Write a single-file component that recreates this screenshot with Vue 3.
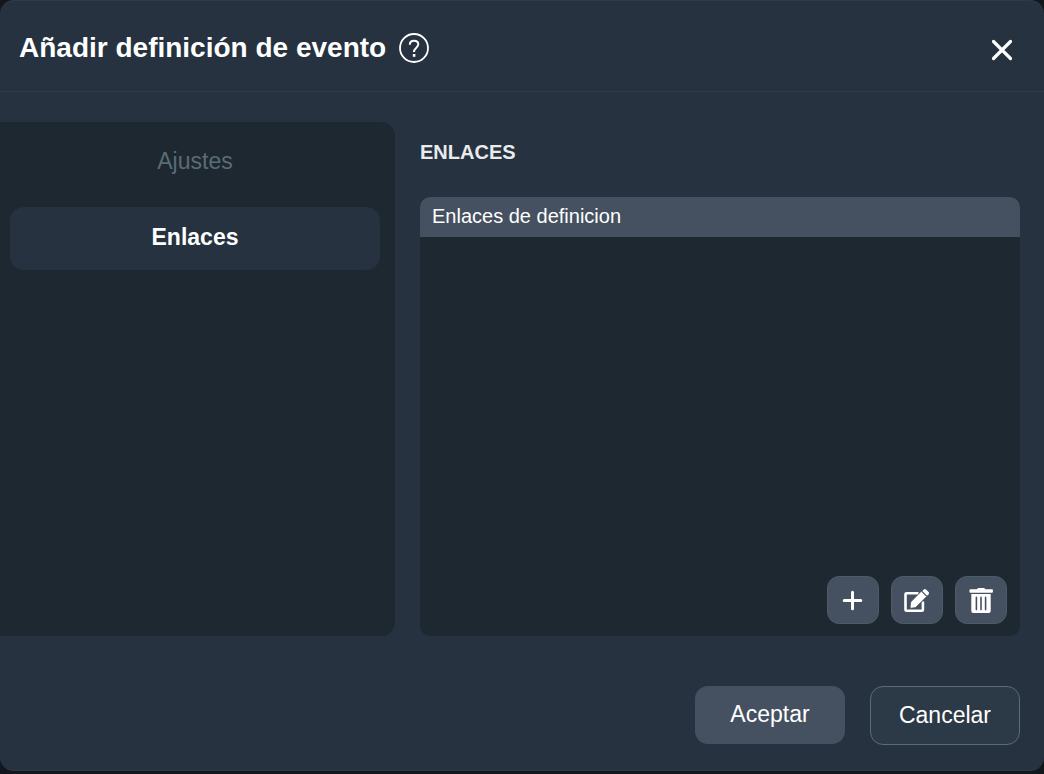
<template>
  <div class="dialog" role="dialog" aria-labelledby="dialog-title">
    <header class="dialog-header">
      <h1 id="dialog-title">Añadir definición de evento</h1>
      <button class="icon-btn help" type="button" aria-label="Ayuda">
        <svg viewBox="0 0 30 30" width="30" height="30">
          <circle cx="15" cy="15" r="14" fill="none" stroke="#fff" stroke-width="1.8" />
          <path d="M10.8 11.8C10.8 9 12.5 7.7 15 7.7s4.3 1.4 4.3 3.6c0 1.7-1 2.5-2.2 3.6-1.4 1.2-2.1 2-2.1 4.1" fill="none" stroke="#fff" stroke-width="2" />
          <rect x="13.8" y="21" width="2.6" height="2.8" fill="#fff" />
        </svg>
      </button>
      <button class="icon-btn close" type="button" aria-label="Cerrar">
        <svg viewBox="0 0 22 22" width="22" height="22">
          <path d="M2.5 2.5l17 17M19.5 2.5l-17 17" fill="none" stroke="#fff" stroke-width="3.2" stroke-linecap="round" />
        </svg>
      </button>
    </header>

    <div class="dialog-body">
      <nav class="tabs">
        <button
          v-for="tab in tabs"
          :key="tab"
          type="button"
          class="tab"
          :class="{ active: tab === activeTab }"
          @click="activeTab = tab"
        >{{ tab }}</button>
      </nav>

      <section class="content">
        <h2>{{ activeTab }}</h2>
        <div class="list">
          <div class="list-title">Enlaces de definicion</div>
          <div class="list-actions">
            <button type="button" class="action" aria-label="Añadir">
              <svg viewBox="0 0 26 26" width="26" height="26">
                <path d="M12.5 5.2v16.6M4.2 13.5h16.6" fill="none" stroke="#fff" stroke-width="3" stroke-linecap="round" />
              </svg>
            </button>
            <button type="button" class="action" aria-label="Editar">
              <svg viewBox="0 0 26 26" width="26" height="26">
                <path d="M14.5 6.3H2.5a1 1 0 0 0-1 1v15.4a1 1 0 0 0 1 1h15.4a1 1 0 0 0 1-1v-8.2" fill="none" stroke="#fff" stroke-width="2.6" />
                <path d="M17.3 4.2l5.4 5.4-11.1 11-4.4.6a1 1 0 0 1-1.1-1.2l.6-5z" fill="#fff" stroke="#455160" stroke-width=".8" />
                <path d="M18.3 3.9l1.5-1.5a1.6 1.6 0 0 1 2.2 0l2.6 2.6a1.6 1.6 0 0 1 0 2.2l-1.5 1.5z" fill="#fff" />
              </svg>
            </button>
            <button type="button" class="action" aria-label="Eliminar">
              <svg viewBox="0 0 26 26" width="26" height="26">
                <path d="M2.4 2.2h6.4l.8-.8a1 1 0 0 1 .8-.4h5.6a1 1 0 0 1 .8.4l.8.8H24a.9.9 0 0 1 .9.9v1.7a.9.9 0 0 1-.9.9H2.4a.9.9 0 0 1-.9-.9V3.1a.9.9 0 0 1 .9-.9z" fill="#fff" />
                <path d="M3.3 7h19.4v17a2 2 0 0 1-2 2H5.3a2 2 0 0 1-2-2z" fill="#fff" />
                <path d="M8.4 10.4v12.2M13 10.4v12.2M17.6 10.4v12.2" stroke="#455160" stroke-width="1.6" stroke-linecap="round" />
              </svg>
            </button>
          </div>
        </div>
      </section>
    </div>

    <footer class="dialog-footer">
      <button type="button" class="btn accept">Aceptar</button>
      <button type="button" class="btn cancel">Cancelar</button>
    </footer>
  </div>
</template>

<script setup>
import { ref } from "vue";

const tabs = ["Ajustes", "Enlaces"];
const activeTab = ref("Enlaces");
</script>

<style>
body {
  margin: 0;
  background-color: #11171b;
}
</style>

<style scoped>
.dialog {
  box-sizing: border-box;
  border: 1px solid #2e3b47;
  border-width: 1px 0;
  border-radius: 14px;
  background-color: #263240;
  color: #fff;
  font-family: "Liberation Sans", Arial, sans-serif;
  overflow: hidden;
}

button {
  font-family: inherit;
  color: inherit;
  border: none;
  cursor: pointer;
}

svg {
  display: block;
}

.dialog-header {
  display: flex;
  align-items: flex-start;
  padding: 32px 31px 28px 19px;
  border-bottom: 1px solid #2e3b47;
}

h1 {
  margin: 0;
  font-size: 28px;
  line-height: 29px;
}

.icon-btn {
  padding: 0;
  background: none;
}

.help {
  margin-left: 13px;
}

.close {
  margin-top: 6px;
  margin-left: auto;
}

.dialog-body {
  display: grid;
  grid-template-columns: 395px 1fr;
  column-gap: 25px;
  padding: 30px 24px 0 0;
}

.tabs {
  display: flex;
  flex-direction: column;
  gap: 13px;
  padding: 9px 15px 0 10px;
  border-radius: 0 14px 14px 0;
  background-color: #1e2831;
}

.tab {
  height: 63px;
  padding: 0 0 2px;
  border-radius: 14px;
  background: none;
  color: #5a6c75;
  font-size: 23px;
}

.tab.active {
  background-color: #263240;
  color: #fff;
  font-weight: bold;
}

h2 {
  margin: 0;
  padding: 18px 0 33px;
  color: #e9ebed;
  font-size: 20px;
  line-height: 24px;
  text-transform: uppercase;
}

.list {
  display: flex;
  flex-direction: column;
  min-height: 439px;
  border-radius: 10px;
  background-color: #1e2831;
  overflow: hidden;
}

.list-title {
  padding: 0 12px 2px;
  background-color: #455160;
  font-size: 20px;
  line-height: 38px;
}

.list-actions {
  display: flex;
  justify-content: flex-end;
  gap: 12px;
  margin-top: auto;
  padding: 12px 13px;
}

.action {
  display: flex;
  align-items: center;
  justify-content: center;
  width: 52px;
  height: 48px;
  padding: 0;
  border: 1px solid #4d5a68;
  border-radius: 12px;
  background-color: #455160;
}

.dialog-footer {
  display: flex;
  justify-content: flex-end;
  gap: 25px;
  padding: 50px 24px 25px;
}

.btn {
  width: 150px;
  height: 59px;
  padding: 0 0 1px;
  border-radius: 13px;
  font-size: 23px;
}

.accept {
  height: 58px;
  background-color: #455160;
}

.cancel {
  border: 1px solid #5a6c75;
  background-color: #2c3946;
}
</style>
